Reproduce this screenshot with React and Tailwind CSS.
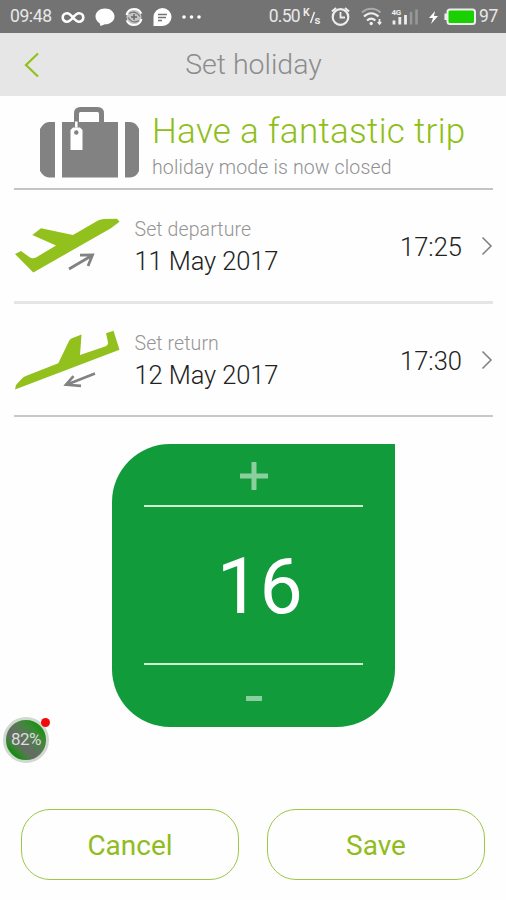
const StatusBar = () => (
    <div className="flex h-[33px] items-center bg-[#737373] pl-[10px] pr-2 text-[17.5px] tracking-[-0.4px] text-[#e8e8e8]">
        <span className="w-[42px]">09:48</span>
        <svg width="150" height="32" viewBox="52 0 150 32" fill="none" stroke="#fff">
            {/* infinity */}
            <path
                d="M73 16.500c-2.400-3-4-4.300-6-4.300a4 4 0 0 0 0 8.600c2 0 3.600-1.300 6-4.300s4-4.300 6-4.300a4 4 0 0 1 0 8.600c-2 0-3.600-1.300-6-4.300z"
                strokeWidth="2.600"
            />
            {/* chat bubble */}
            <path
                d="M105 7.500c5.300 0 9.500 3.400 9.500 8s-4.200 7.800-9.500 7.800l-4.500 1.700-.8-2.800c-2.600-1.500-4.200-3.900-4.200-6.700 0-4.600 4.200-8 9.500-8z"
                fill="#fff"
                stroke="none"
            />
            {/* sync globe */}
            <circle cx="134" cy="16" r="7.500" fill="#c4c4c4" stroke="none" />
            <path d="M126.500 14c1-4 4-6 7.500-6 3.300 0 6 1.600 7.300 4.600M141.500 18c-1 4-4 6-7.500 6-3.300 0-6-1.600-7.300-4.600" strokeWidth="2" />
            <path d="M129 12.500q6-4 11 3M139 19.500q-6 4-11-3" stroke="#737373" strokeWidth="1.200" />
            <path d="M131 16h6M134 13v6" stroke="#666" strokeWidth="1.400" />
            {/* message */}
            <path d="M162.500 7a9 9 0 1 1 0 18H153.500V16a9 9 0 0 1 9-9z" fill="#fff" stroke="none" />
            <path d="M158 13.500h9M158 16.500h8M158 19.500h4" stroke="#737373" strokeWidth="1.400" />
            <g fill="#fff" stroke="none">
                <circle cx="184" cy="16" r="1.800" />
                <circle cx="191.500" cy="16" r="1.800" />
                <circle cx="199" cy="16" r="1.800" />
            </g>
        </svg>
        <span className="ml-auto tracking-[-0.700px]">0.50</span>
        <svg width="181" height="32" viewBox="299 0 181 32" fill="none" stroke="#eee" className="shrink-0">
            <g fill="#eee" stroke="none" fontFamily="Roboto, sans-serif">
                <text x="302" y="15" fontSize="10.500" fontWeight="600">K</text>
                <text x="313.500" y="22.500" fontSize="11.500" fontWeight="600">s</text>
            </g>
            <path d="M313.500 11l-4 11" strokeWidth="1.500" />
            {/* alarm */}
            <circle cx="339.500" cy="16" r="7.800" strokeWidth="2.200" />
            <path d="M339.500 11v5.500h4.500" strokeWidth="1.800" />
            <path d="M331 10.500l4-3.500M348 10.500l-4-3.500" strokeWidth="2" />
            {/* wifi */}
            <path d="M361 11.500c5.500-5 13-5 18.500 0" stroke="#aaa" strokeWidth="2" />
            <path d="M363 15.500c4.500-4.300 10-4.300 14.500 0M366 19.500c2.800-2.500 5.600-2.500 8.400 0" strokeWidth="2.200" />
            <circle cx="370.200" cy="22.500" r="1.700" fill="#eee" stroke="none" />
            <path d="M378.500 18v5m-1.700-2l1.700 2 1.700-2" strokeWidth="1.600" />
            {/* signal */}
            <text x="390.500" y="14" fill="#eee" stroke="none" fontFamily="Roboto, sans-serif" fontSize="8" fontWeight="700">4G</text>
            <path d="M393 19.500v4M398.800 16v7.500M404.500 14v9.500" strokeWidth="2.800" />
            <path d="M410 11v12.500M415.500 8.500v15" stroke="#999" strokeWidth="2.500" />
            {/* charging */}
            <path d="M434 10l-6 7h4l-2 6 7-8h-4z" fill="#fff" stroke="none" />
            <rect x="446.500" y="8.500" width="27.500" height="14.500" rx="2.500" fill="#1bd000" stroke="#eee" strokeWidth="2" />
            <path d="M444.700 12.500v6.500" strokeWidth="2.500" />
        </svg>
        <span className="-ml-[2px] w-[19px]">97</span>
    </div>
)

const Suitcase = () => (
    <svg width="100" height="74" viewBox="0 0 100 74" fill="#828282">
        <path d="M16 16v55.500H10Q5 71.500 1 65V23Q5 16 10 16z" />
        <path d="M23 16h56v55.500H23z" />
        <path d="M86 16h5q6 0 9 7v42q-3 6.500-9 6.500h-5z" />
        <path d="M37.500 17V7.500q0-4 4-4h17q4 0 4 4V17" fill="none" stroke="#828282" strokeWidth="5" />
        <path d="M37.300 15.500v6" stroke="#fff" strokeWidth="2.500" />
        <path d="M34 21.500h7l2.500 2.500v20H31.500V24z" fill="#fff" />
        <circle cx="37.300" cy="26.500" r="2.200" />
    </svg>
)

const Departure = () => (
    <svg width="107" height="60" viewBox="0 -1 107 60" fill="none">
        <path
            d="M1 37l6-3 9 6.500q2.500 1.500 6 0L42 28.500 18.300 18l8.700-6.700L59 18 84 3.500Q87 2 90 2l13-.2 2.500 3-9 6.700L19.300 55.500z"
            fill="#92c11e"
        />
        <path d="M55 52l23-13.500M66 38.200l12.500-.2-4.500 11" stroke="#828282" strokeWidth="2.800" />
    </svg>
)

const Return = () => (
    <svg width="107" height="60" viewBox="0 0 107 60" fill="none">
        <path
            d="M1 59.500l1-4.500 6-6.500q2-2 5-3L44.300 33.300 55 11q1-2 3-2.700l9.500-3.800L66 25l25-8.500q3.500-1.500 3-4L92 3.200l7.500-2.500 6 19z"
            fill="#92c11e"
        />
        <path d="M81 43.500L52.500 54.700M59.500 46.200l-7.500 8.500 15 1.200" stroke="#828282" strokeWidth="2.600" />
    </svg>
)

const DateRow = ({ icon, label, date, time }) => (
    <div className="flex h-[111px] items-center">
        {icon}
        <div className="ml-[13.500px] flex-1 pt-[4px]">
            <p className="text-[19.500px] leading-[24px] font-[350] tracking-[0.100px] text-[#959595]">{label}</p>
            <p className="mt-[3px] text-[25.500px] leading-[32px] font-light tracking-[-0.100px] text-[#222]">{date}</p>
        </div>
        <p className="mr-[19px] pt-[2px] text-[25.500px] leading-[32px] font-light text-[#222]">{time}</p>
        <svg width="12" height="20" viewBox="0 0 12 20" fill="none" stroke="#828282" strokeWidth="1.600">
            <path d="M1.500 1.500L10 10l-8.500 8.500" />
        </svg>
    </div>
)

const App = () => {
    return (
        <main className="relative h-[900px] w-[506px] overflow-hidden bg-[#fefefe] font-['Roboto',sans-serif]">
            <StatusBar />

            <header className="flex h-[63px] items-center bg-[#e6e6e6] pl-[24px] pr-[38px]">
                <svg width="15" height="26" viewBox="0 0 15 26" fill="none" stroke="#92c11e" strokeWidth="2.200">
                    <path d="M14 1.500L2 13l12 11.500" />
                </svg>
                <h1 className="flex-1 pt-[2px] text-center text-[28.500px] font-[350] text-[#8c8c8c]">Set holiday</h1>
            </header>

            <div className="ml-[14px] mr-[13px]">
                <section className="flex h-[94px] items-start border-b-2 border-[#c4c4c4] pl-[25px] pt-[10px]">
                    <Suitcase />
                    <div className="ml-[13px] pt-[5px]">
                        <h2 className="whitespace-nowrap text-[35px] leading-[42px] font-[350] tracking-[0.300px] text-[#8ebf18]">
                            Have a fantastic trip
                        </h2>
                        <p className="mt-[3px] text-[19.500px] leading-[24px] font-[350] tracking-[0.150px] text-[#909090]">
                            holiday mode is now closed
                        </p>
                    </div>
                </section>

                <DateRow icon={<Departure />} label="Set departure" date="11 May 2017" time="17:25" />
                <div className="h-[3px] bg-[#e5e5e5]"></div>
                <DateRow icon={<Return />} label="Set return" date="12 May 2017" time="17:30" />
                <div className="h-[2px] bg-[#c8c8c8]"></div>
            </div>

            {/* Temperature picker */}
            <section className="ml-[112px] mt-[27px] flex h-[283px] w-[283px] flex-col items-center rounded-[58px] rounded-tr-none bg-[#129b3b]">
                <button className="flex h-[61px] items-center pt-[2px]" aria-label="Increase">
                    <svg width="28" height="28" viewBox="0 0 28 28" stroke="#8bcf9e" strokeWidth="5">
                        <path d="M0 14h28M14 0v28" />
                    </svg>
                </button>
                <div className="flex h-[160px] w-[219px] items-center justify-center border-y-2 border-[#d0f5d5] pl-[12px] pt-[5px] text-[77px] tracking-[-0.500px] text-white">
                    16
                </div>
                <button className="flex h-[62px] items-center pt-[5px]" aria-label="Decrease">
                    <svg width="16" height="5" viewBox="0 0 16 5">
                        <path d="M0 0h16v5H0z" fill="#8bcf9e" />
                    </svg>
                </button>
            </section>

            <div className="mt-[82px] flex gap-[28px] px-[21px] text-[28px] text-[#8fbd20]">
                <button className="h-[71px] flex-1 rounded-[29px] border-[1.500px] border-[#9bc848] pt-[2px]">Cancel</button>
                <button className="h-[71px] flex-1 rounded-[29px] border-[1.500px] border-[#9bc848] pt-[2px]">Save</button>
            </div>

            {/* Floating memory badge */}
            <div className="absolute left-[3px] top-[717px] flex h-[46px] w-[46px] items-center justify-center rounded-full border-3 border-[#d0d8d0] bg-linear-to-tr from-[#1c8a16] from-20% via-[#666a66] via-40% to-[#20901a] to-80% text-[17px] tracking-[-0.500px] text-[#dcdcdc]">
                82%
                <span className="absolute -top-[2px] -right-[4px] h-[9px] w-[9px] rounded-full bg-[#f00c0c]"></span>
            </div>
        </main>
    )
}

export default App
